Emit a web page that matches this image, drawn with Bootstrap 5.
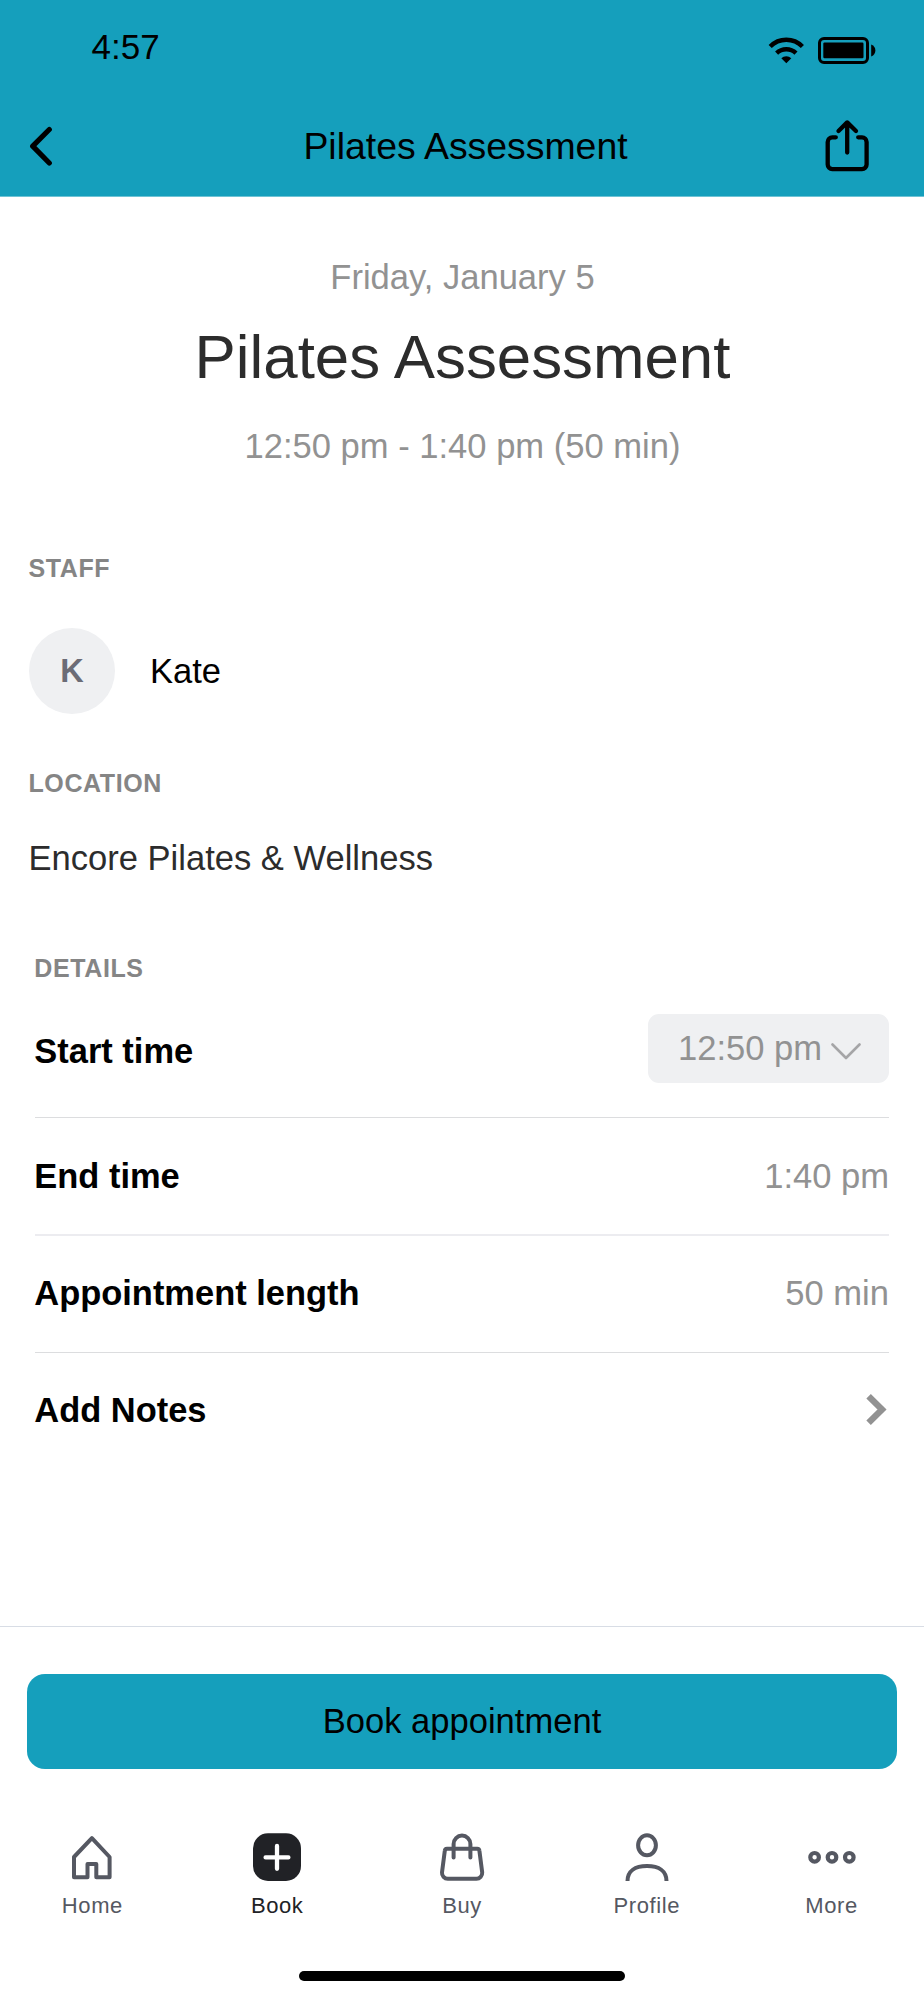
<!DOCTYPE html>
<html lang="en">
<head>
<meta charset="utf-8">
<meta name="viewport" content="width=device-width, initial-scale=1">
<title>Pilates Assessment</title>
<link href="https://cdn.jsdelivr.net/npm/bootstrap@5.3.0/dist/css/bootstrap.min.css" rel="stylesheet">
<style>
  body { font-family: "Liberation Sans", Arial, sans-serif; font-size: 34.55px; line-height: 48px; color: #000; background: #fff; }
  .screen { height: 2000px; }
  .app-header { background: #159fbc; border-bottom: 1px solid #6ec3d5; }
  .status-row { height: 94px; padding: 0 48px 0 91.5px; font-size: 35px; }
  .status-icons { margin-top: 8px; }
  .title-row { height: 102px; padding: 2px 55px 0 29px; }
  .title-row h1 { font-size: 37.4px; line-height: 48px; padding-left: 53px; }
  .muted { color: #929292; }
  .summary { padding-top: 56px; }
  .summary > * { padding-left: 1px; }
  .summary h2 { font-size: 61.8px; line-height: 80px; margin: 16px 0 25px; color: #2c2c2c; }
  .section-label { font-size: 25px; line-height: 32px; font-weight: 700; letter-spacing: .6px; color: #858585; margin: 0; }
  .staff-block { padding: 82px 28.5px 0; }
  .staff-row { margin-top: 44px; gap: 35.5px; }
  .avatar { width: 86px; height: 86px; background: #eff0f2; color: #6b6c76; font-size: 32.5px; font-weight: 700; padding-left: 1px; }
  .location-block { padding: 53px 28.5px 0; }
  .location-name { margin: 35px 0 0; color: #2c2c2c; }
  .details-block { padding: 70px 35px 0 34px; }
  .details-block .section-label { padding-left: .3px; }
  .detail-row { height: 117px; border-bottom: 1px solid #dcdddf; margin-left: 1px; padding-bottom: 2px; }
  .detail-row dt, .detail-row dd { margin: 0; }
  .detail-row dt { margin-left: -.7px; font-size: 34.45px; }
  .detail-row:nth-child(1) { height: 134px; padding: 1px 0 0; }
  .detail-row:nth-child(2) { height: 118px; border-bottom: 2px solid #ececf0; padding: 0; }
  .detail-row:last-child { border: 0; padding-bottom: 3px; }
  .time-select { width: 241px; height: 69px; padding: 0 28px 0 30px; margin-bottom: 6px; border: 0; border-radius: 11px; background: #eff0f2; color: #929292; }
  .book-bar { border-top: 1px solid #d8dde5; padding: 47px 27px 0; }
  .book-btn, .book-btn:hover { height: 95px; border: 0; border-radius: 18px; background: #159fbc; color: #000; font-size: 34.55px; padding: 0; }
  .tab-row { padding-top: 64px; }
  .tab-link { flex: 1 1 0; gap: 12px; color: #555862; font-size: 22px; line-height: 26px; letter-spacing: .6px; text-decoration: none; }
  .tab-link.current { color: #212226; }
  .home-indicator { width: 326px; height: 10px; border-radius: 5px; background: #000; margin-top: 52px; margin-bottom: 19px; }
</style>
</head>
<body>
<div class="screen d-flex flex-column overflow-hidden">
  <header class="app-header">
    <div class="status-row d-flex align-items-center justify-content-between">
      <span>4:57</span>
      <svg class="status-icons" width="108" height="28" viewBox="0 0 108 28" fill="none" stroke="#000">
        <path d="M2.200 9.500a22.500 22.500 0 0 1 32.200 0M8.600 16.200a14 14 0 0 1 19.400 0" stroke-width="4.400"/>
        <path d="M18.300 26.300l-5-5a7 7 0 0 1 10 0z" fill="#000" stroke="none"/>
        <rect x="51.500" y="1.500" width="48" height="24" rx="4.500" stroke-width="3"/>
        <rect x="55.300" y="5.600" width="40.200" height="15.600" rx="1.200" fill="#000" stroke="none"/>
        <path d="M103.200 7.600c5.600 2 5.600 9.800 0 11.800z" fill="#000" stroke="none"/>
      </svg>
    </div>
    <div class="title-row d-flex align-items-center">
      <svg width="24" height="40" viewBox="0 0 24 40" fill="none" stroke="#000" stroke-width="5.200" stroke-linecap="round" stroke-linejoin="round"><path d="M20.300 3.500L3.700 20.200 20.300 37"/></svg>
      <h1 class="flex-grow-1 text-center fw-normal mb-0">Pilates Assessment</h1>
      <svg width="44" height="54" viewBox="0 0 44 54" fill="none" stroke="#000" stroke-width="4.300" stroke-linecap="round" stroke-linejoin="round"><path d="M10.800 18.300H7.300a4.600 4.600 0 0 0-4.600 4.600V45.600a4.600 4.600 0 0 0 4.600 4.600H37a4.600 4.600 0 0 0 4.600-4.600V22.900a4.600 4.600 0 0 0-4.600-4.600H33.200M22.200 33.500V4M13.500 12L22.200 3.400 31 12"/></svg>
    </div>
  </header>

  <main class="flex-grow-1">
    <section class="summary text-center">
      <div class="muted">Friday, January 5</div>
      <h2 class="fw-normal">Pilates Assessment</h2>
      <div class="muted">12:50 pm - 1:40 pm (50 min)</div>
    </section>

    <section class="staff-block">
      <h3 class="section-label">STAFF</h3>
      <div class="staff-row d-flex align-items-center">
        <span class="avatar rounded-circle d-flex align-items-center justify-content-center">K</span>
        <span>Kate</span>
      </div>
    </section>

    <section class="location-block">
      <h3 class="section-label">LOCATION</h3>
      <p class="location-name">Encore Pilates &amp; Wellness</p>
    </section>

    <section class="details-block">
      <h3 class="section-label">DETAILS</h3>
      <dl class="mb-0">
        <div class="detail-row d-flex align-items-center justify-content-between">
          <dt>Start time</dt>
          <dd><button type="button" class="time-select d-flex align-items-center justify-content-between">12:50 pm
            <svg width="30" height="18" viewBox="0 0 30 18" class="mt-2" fill="none" stroke="#a5a5a7" stroke-width="2.600" stroke-linecap="round" stroke-linejoin="round"><path d="M1.500 1.500L15 15 28.500 1.500"/></svg></button></dd>
        </div>
        <div class="detail-row d-flex align-items-center justify-content-between">
          <dt>End time</dt><dd class="muted">1:40 pm</dd>
        </div>
        <div class="detail-row d-flex align-items-center justify-content-between">
          <dt>Appointment length</dt><dd class="muted">50 min</dd>
        </div>
        <div class="detail-row d-flex align-items-center justify-content-between">
          <dt>Add Notes</dt>
          <dd class="d-flex"><svg width="24" height="34" viewBox="0 0 24 34" fill="none" stroke="#929292" stroke-width="6.400"><path d="M3.600 3.300L17 16.500 3.600 29.700"/></svg></dd>
        </div>
      </dl>
    </section>
  </main>

  <footer>
    <div class="book-bar"><button type="button" class="btn book-btn w-100">Book appointment</button></div>
    <nav class="tab-row d-flex">
      <a href="#" class="tab-link d-flex flex-column align-items-center">
        <svg width="48" height="48" viewBox="0 0 48 48" fill="none" stroke="currentColor" stroke-width="4" stroke-linejoin="round"><path d="M23.900 5.200L41.600 24V44.200H28.300V31H19.500V44.200H6V24z"/></svg>
        Home</a>
      <a href="#" class="tab-link current d-flex flex-column align-items-center">
        <svg width="48" height="48" viewBox="0 0 48 48"><rect y=".3" width="48" height="47.700" rx="15" fill="#212226"/><path d="M24 13V35.800M12.600 24.400H35.400" stroke="#fff" stroke-width="4.300" stroke-linecap="round"/></svg>
        Book</a>
      <a href="#" class="tab-link d-flex flex-column align-items-center">
        <svg width="48" height="48" viewBox="0 0 48 48" fill="none" stroke="currentColor" stroke-width="4" stroke-linecap="round" stroke-linejoin="round"><path d="M9 15.800H39.200a2.200 2.200 0 0 1 2.200 2L44.200 39.500a5.800 5.800 0 0 1-5.800 6.300H9.800A5.800 5.800 0 0 1 4 39.500L6.800 17.800a2.200 2.200 0 0 1 2.200-2zM15.600 24.400V11a8.400 8.400 0 0 1 16.800 0V24.400"/></svg>
        Buy</a>
      <a href="#" class="tab-link d-flex flex-column align-items-center">
        <svg width="48" height="48" viewBox="0 0 48 48" fill="none" stroke="currentColor" stroke-width="4"><ellipse cx="24" cy="12.300" rx="8.900" ry="10"/><path d="M4.500 48C4.500 38 12 33 24 33S43.500 38 43.500 48"/></svg>
        Profile</a>
      <a href="#" class="tab-link d-flex flex-column align-items-center">
        <svg width="48" height="48" viewBox="0 0 48 48" fill="none" stroke="currentColor" stroke-width="4.200"><circle cx="6.600" cy="24.300" r="4.300"/><circle cx="24" cy="24.300" r="4.300"/><circle cx="41.300" cy="24.300" r="4.300"/></svg>
        More</a>
    </nav>
    <div class="home-indicator mx-auto"></div>
  </footer>
</div>
<script src="https://cdn.jsdelivr.net/npm/bootstrap@5.3.0/dist/js/bootstrap.bundle.min.js"></script>
</body>
</html>
